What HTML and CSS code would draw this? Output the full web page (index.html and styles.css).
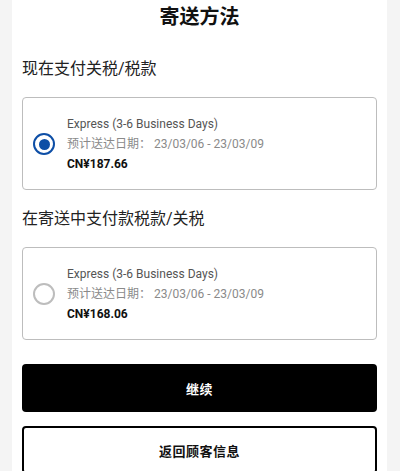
FILE: index.html
```html
<!DOCTYPE html>
<html lang="zh">
<head>
<meta charset="utf-8">
<link rel="stylesheet" href="styles.css">
</head>
<body>
<main class="page">
  <h1 class="title">寄送方法</h1>

  <h2 class="section-title first">现在支付关税/税款</h2>
  <label class="option">
    <span class="radio selected"></span>
    <span class="info">
      <span class="line name">Express (3-6 Business Days)</span>
      <span class="line date">预计送达日期： 23/03/06 - 23/03/09</span>
      <span class="line price">CN¥187.66</span>
    </span>
  </label>

  <h2 class="section-title">在寄送中支付款税款/关税</h2>
  <label class="option">
    <span class="radio"></span>
    <span class="info">
      <span class="line name">Express (3-6 Business Days)</span>
      <span class="line date">预计送达日期： 23/03/06 - 23/03/09</span>
      <span class="line price">CN¥168.06</span>
    </span>
  </label>

  <button class="btn primary">继续</button>
  <button class="btn secondary">返回顾客信息</button>
</main>
</body>
</html>
```

FILE: styles.css
```css
html, body {
  margin: 0;
  padding: 0;
  background: #f4f4f4;
}
body {
  font-family: Roboto, "Noto Sans CJK SC", "Noto Sans", sans-serif;
  color: #222;
}
.page {
  margin: 0 13px 0 12px;
  min-height: 471px;
  background: #fff;
  padding: 3px 10px 0;
  display: flex;
  flex-direction: column;
  box-sizing: border-box;
}
.title {
  margin: 0;
  font-size: 20px;
  line-height: 28px;
  font-weight: 700;
  text-align: center;
  color: #111;
}
.section-title {
  margin: 17px 0 0;
  font-size: 16px;
  line-height: 24px;
  font-weight: 400;
  color: #222;
}
.section-title.first {
  margin-top: 26px;
}
.option {
  margin-top: 16px;
  border: 1px solid #bdbdbd;
  border-radius: 4px;
  padding: 16px 10px 15px;
  display: flex;
  align-items: center;
  gap: 12px;
}
.radio {
  width: 22px;
  height: 22px;
  box-sizing: border-box;
  border: 2px solid #bdbdbd;
  border-radius: 50%;
  flex: none;
  display: flex;
  align-items: center;
  justify-content: center;
}
.radio.selected {
  border: 2.5px solid #0d4ea6;
}
.radio.selected::after {
  content: "";
  width: 11px;
  height: 11px;
  border-radius: 50%;
  background: #0d4ea6;
}
.info {
  display: flex;
  flex-direction: column;
}
.line {
  font-size: 12px;
  line-height: 20px;
}
.name {
  color: #555;
}
.date {
  color: #8a8a8a;
}
.price {
  color: #111;
  font-weight: 700;
}
.btn {
  font-family: Roboto, "Noto Sans CJK SC", sans-serif;
  font-size: 13px;
  font-weight: 700;
  letter-spacing: 0.5px;
  height: 48px;
  border-radius: 4px;
  width: 100%;
  cursor: pointer;
}
.btn.primary {
  margin-top: 24px;
  background: #000;
  color: #fff;
  border: none;
}
.btn.secondary {
  margin-top: 14px;
  background: #fff;
  color: #111;
  border: 2px solid #000;
}
```
